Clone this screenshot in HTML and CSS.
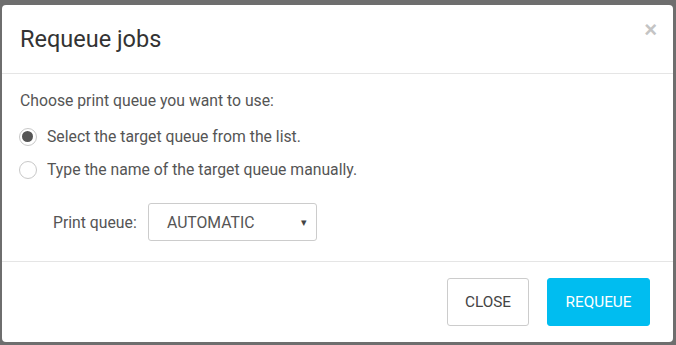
FILE: index.html
```html
<!DOCTYPE html>
<html>
<head>
<meta charset="utf-8">
<link rel="stylesheet" href="styles.css">
</head>
<body>
<div class="backdrop">
  <div class="modal">
    <div class="modal-header">
      <h2 class="title">Requeue jobs</h2>
      <button class="close-x" aria-label="Close">&times;</button>
    </div>
    <div class="modal-body">
      <p class="intro">Choose print queue you want to use:</p>
      <label class="radio-row">
        <span class="radio checked"></span>
        <span>Select the target queue from the list.</span>
      </label>
      <label class="radio-row">
        <span class="radio"></span>
        <span>Type the name of the target queue manually.</span>
      </label>
      <div class="field-row">
        <span class="field-label">Print queue:</span>
        <div class="select">
          <span>AUTOMATIC</span>
          <span class="caret">&#9662;</span>
        </div>
      </div>
    </div>
    <div class="modal-footer">
      <button class="btn btn-default">CLOSE</button>
      <button class="btn btn-primary">REQUEUE</button>
    </div>
  </div>
</div>
</body>
</html>
```

FILE: styles.css
```css
html, body {
  margin: 0;
  padding: 0;
  height: 100%;
}
body {
  background: #6e6e6e;
  font-family: Roboto, "Liberation Sans", sans-serif;
  color: #333;
}
.backdrop {
  padding: 5px 3px 3px 2px;
  height: 100%;
  box-sizing: border-box;
  display: flex;
}
.modal {
  flex: 1;
  background: #fff;
  border-radius: 4px;
  display: flex;
  flex-direction: column;
}
.modal-header {
  height: 69px;
  box-sizing: border-box;
  border-bottom: 1px solid #e5e5e5;
  display: flex;
  align-items: center;
  justify-content: space-between;
  padding: 0 16px 0 18px;
}
.title {
  margin: 0;
  font-size: 23.5px;
  font-weight: 400;
  color: #333;
}
.close-x {
  border: 0;
  background: none;
  font-family: "Liberation Sans", sans-serif;
  font-size: 22px;
  font-weight: 700;
  color: #c4c4c4;
  padding: 0;
  margin-top: -19px;
  line-height: 1;
}
.modal-body {
  flex: 1;
  padding: 17px 18px 0 18px;
  border-bottom: 1px solid #e5e5e5;
  font-size: 15.75px;
  color: #555;
}
.intro {
  margin: 0 0 9px 0;
  line-height: 20px;
}
.radio-row {
  display: flex;
  align-items: center;
  gap: 10px;
  height: 33px;
}
.radio {
  width: 18px;
  height: 18px;
  border: 1.5px solid #c8c8c8;
  border-radius: 50%;
  box-sizing: border-box;
  position: relative;
  margin-left: -1px;
}
.radio.checked::after {
  content: "";
  position: absolute;
  left: 2px;
  top: 2px;
  width: 11px;
  height: 11px;
  border-radius: 50%;
  background: #555;
}
.field-row {
  display: flex;
  align-items: center;
  margin-top: 17px;
  padding-left: 33px;
}
.field-label {
  width: 95px;
  color: #555;
}
.select {
  width: 169px;
  height: 38px;
  box-sizing: border-box;
  border: 1px solid #ccc;
  border-radius: 3px;
  display: flex;
  align-items: center;
  justify-content: space-between;
  padding: 0 9px 0 18px;
  color: #555;
}
.caret {
  font-size: 11px;
  color: #444;
}
.modal-footer {
  height: 80px;
  box-sizing: border-box;
  display: flex;
  justify-content: flex-end;
  align-items: flex-start;
  padding: 16px 23px 0 0;
  gap: 18px;
}
.btn {
  height: 48px;
  font-family: Roboto, "Liberation Sans", sans-serif;
  font-size: 15.3px;
  border-radius: 3px;
  cursor: pointer;
}
.btn-default {
  width: 82px;
  background: #fff;
  border: 1px solid #ccc;
  color: #444;
}
.btn-primary {
  width: 103px;
  background: #00bdf0;
  border: 1px solid #00bdf0;
  color: #fff;
}
```
